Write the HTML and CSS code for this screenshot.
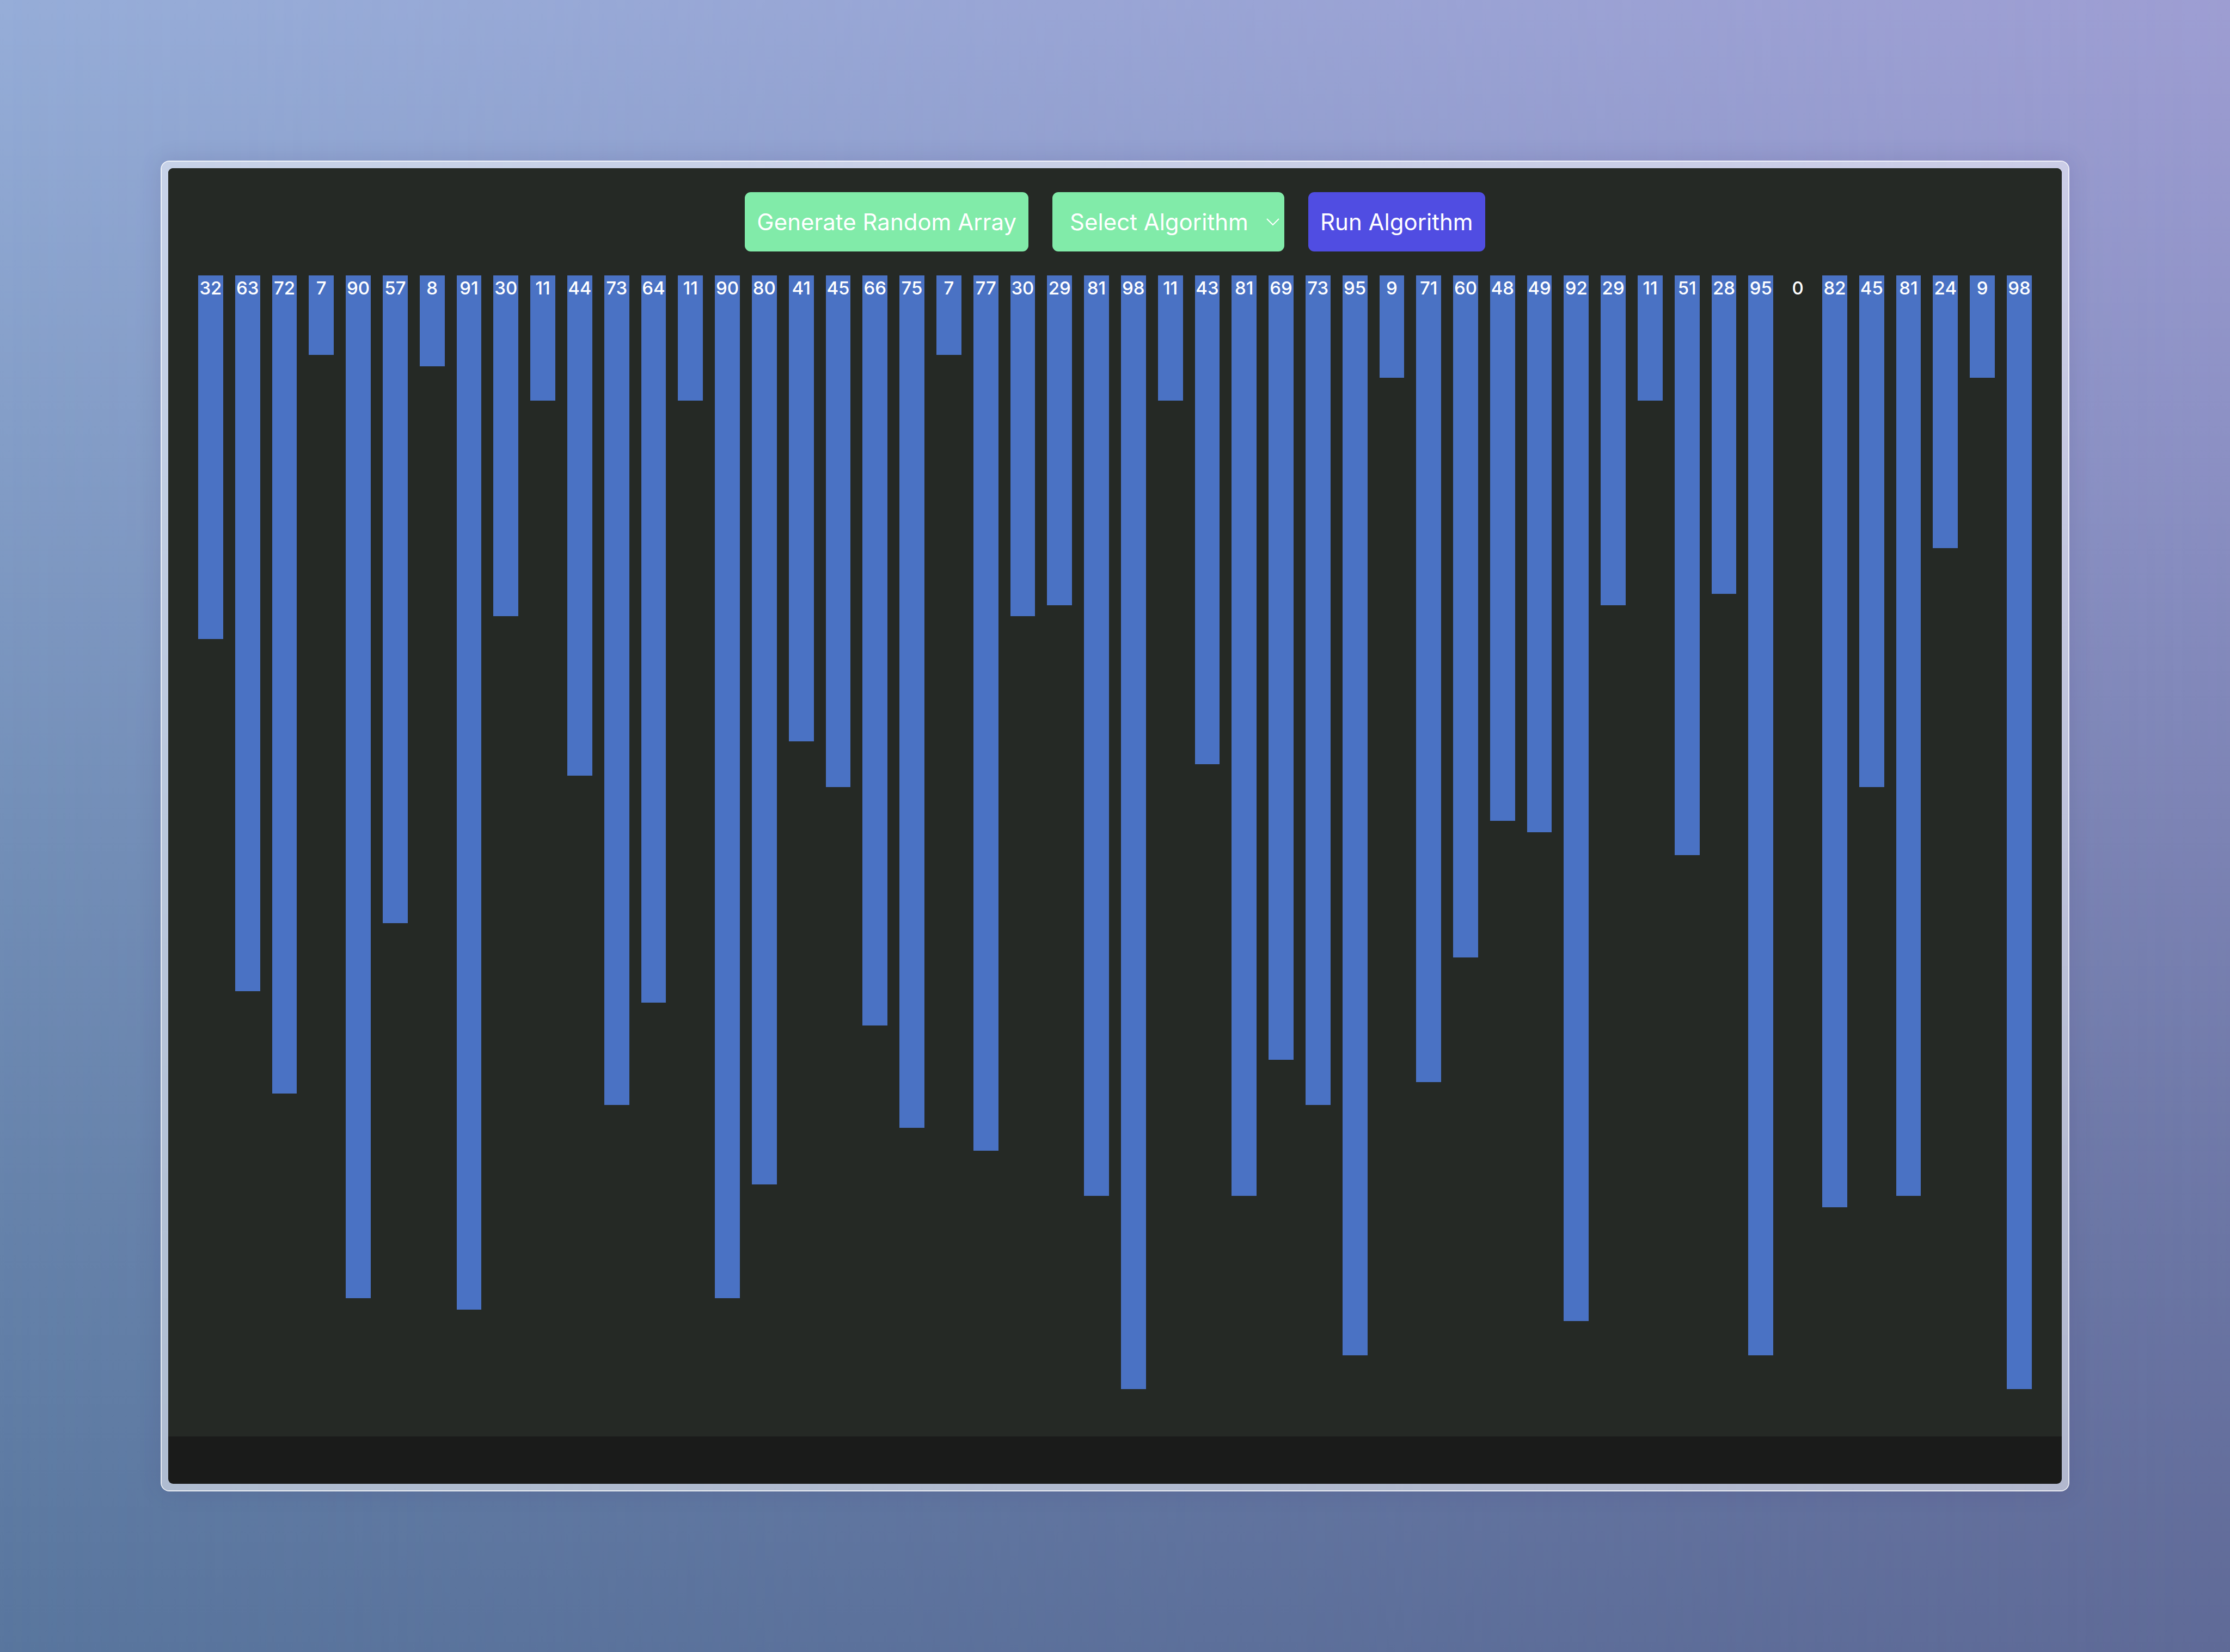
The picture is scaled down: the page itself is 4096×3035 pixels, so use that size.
FILE: index.html
```html
<!DOCTYPE html>
<html lang="en">
<head>
<meta charset="utf-8">
<title>Sorting Visualizer</title>
<link rel="stylesheet" href="styles.css">
</head>
<body>
<div class="window">
  <main class="app">
    <section class="visualizer">
      <div class="toolbar">
        <button class="control control-generate" type="button">Generate Random Array</button>
        <div class="picker">
          <select class="control control-select" aria-label="Algorithm">
            <option>Select Algorithm</option>
            <option>Bubble Sort</option>
            <option>Merge Sort</option>
            <option>Quick Sort</option>
          </select>
          <svg class="chevron" viewBox="0 0 24 14" aria-hidden="true"><path d="M1 1 12 12 23 1"/></svg>
        </div>
        <button class="control control-run" type="button">Run Algorithm</button>
      </div>
      <div class="chart" id="chart"></div>
    </section>
  </main>
</div>
<script src="chart.js"></script>
</body>
</html>
```
FILE: styles.css
```css
* {
  box-sizing: border-box;
}

body {
  margin: 0;
  height: 100vh;
  padding: 295px;
  position: relative;
  isolation: isolate;
  font-family: Inter, "Liberation Sans", sans-serif;
  color: #fff;
  background: linear-gradient(to bottom, #96add8 0%, #849ec8 25%, #738fb8 50%, #6582aa 75%, #59769e 100%);
}

/* second vertical gradient, faded in from left to right */
body::before {
  content: "";
  position: absolute;
  inset: 0;
  z-index: -1;
  background: linear-gradient(to bottom, #9d9dd2 0%, #8d91c5 25%, #7c83b4 50%, #6b75a4 75%, #5f6a97 100%);
  mask-image: linear-gradient(to right, transparent, #000);
}

.window {
  height: 100%;
  padding: 12px;
  border: 2px solid rgba(255, 255, 255, 0.85);
  border-radius: 16px;
  background: rgba(255, 255, 255, 0.5);
  background-clip: padding-box;
  box-shadow: 0 0 40px rgba(60, 50, 110, 0.16);
}

.app {
  display: flex;
  flex-direction: column;
  height: 100%;
  padding-bottom: 87px;
  border-radius: 9px;
  overflow: hidden;
  background: #1a1b1a;
}

.visualizer {
  flex: 1;
  min-height: 0;
  display: flex;
  flex-direction: column;
  gap: 44px;
  padding: 44px 55px 45px;
  background: #252925;
}

.toolbar {
  display: flex;
  justify-content: center;
  gap: 44px;
}

.control {
  height: 109px;
  padding: 0 22px;
  border: 0;
  border-radius: 11px;
  font: inherit;
  font-size: 42px;
  color: #fff;
}

.control-generate,
.control-select {
  background: #81eba9;
}

.control-run {
  background: #504de2;
}

.picker {
  position: relative;
}

.control-select {
  appearance: none;
  padding: 0 66px 0 32px;
}

.chevron {
  position: absolute;
  right: 9px;
  top: 48px;
  width: 24px;
  height: 14px;
  fill: none;
  stroke: #fff;
  stroke-width: 2;
  pointer-events: none;
}

.chart {
  flex: 1;
  min-height: 0;
  display: flex;
  align-items: flex-start;
  gap: 22px;
}

.bar {
  flex: 1;
  min-width: 0;
  display: flex;
  justify-content: center;
  background: #4a72c4;
}

.value {
  height: 46px;
  font-size: 33px;
  font-weight: 500;
  line-height: 46px;
}
```
FILE: chart.js
```js
const values = [
  32, 63, 72, 7, 90, 57, 8, 91, 30, 11, 44, 73, 64, 11, 90, 80, 41,
  45, 66, 75, 7, 77, 30, 29, 81, 98, 11, 43, 81, 69, 73, 95, 9, 71,
  60, 48, 49, 92, 29, 11, 51, 28, 95, 0, 82, 45, 81, 24, 9, 98
];

const chart = document.getElementById("chart");

for (const value of values) {
  const bar = document.createElement("div");
  bar.className = "bar";
  bar.style.height = `${value}%`;

  const label = document.createElement("span");
  label.className = "value";
  label.textContent = value;

  bar.append(label);
  chart.append(bar);
}
```
